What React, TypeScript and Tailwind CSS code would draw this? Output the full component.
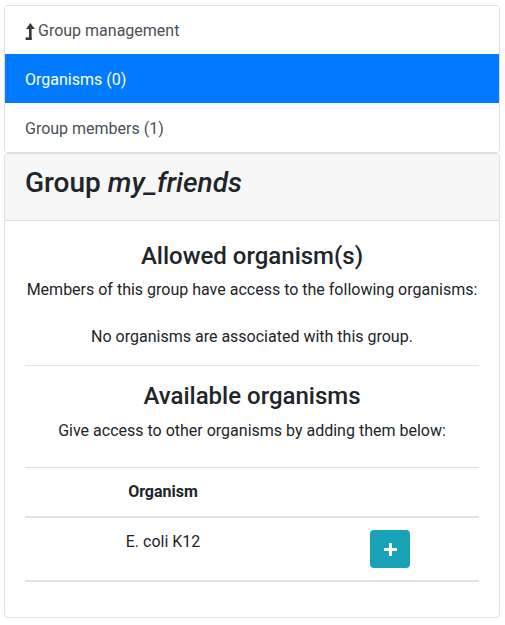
import React from "react";

function LevelUpIcon() {
  return (
    <svg width="10" height="17" viewBox="0 0 10 17" className="inline-block align-[-2px]" fill="#343a40">
      <polygon points="5.3,0 9.8,6 1,6" />
      <rect x="4" y="5" width="2.6" height="12" />
      <rect x="0.6" y="14.4" width="6" height="2.6" />
    </svg>
  );
}

function PlusIcon() {
  return (
    <svg width="13" height="13" viewBox="0 0 13 13" fill="white">
      <rect x="5" y="0" width="3" height="13" rx="0.5" />
      <rect x="0" y="5" width="13" height="3" rx="0.5" />
    </svg>
  );
}

export default function App() {
  return (
    <div className="font-['Roboto',sans-serif] text-[16px] leading-[24px] text-[#212529] bg-white w-[505px] min-h-[625px] pt-[5px] pl-[4px] pr-[5px]">
      <div className="border border-[#dfdfdf] rounded-[4px] overflow-hidden">
        <div className="h-[48px] px-[20px] pt-[2px] flex items-center text-[#495057] bg-white">
          <LevelUpIcon />
          <span className="ml-[3px]">Group management</span>
        </div>
        <div className="h-[49px] px-[20px] pt-[2px] flex items-center text-white bg-[#007bff]">
          Organisms (0)
        </div>
        <div className="h-[49px] px-[20px] pt-[2px] flex items-center text-[#495057] bg-white">
          Group members (1)
        </div>
      </div>
      <div className="border border-[#dfdfdf] rounded-[4px] overflow-hidden">
        <div className="bg-[#f7f7f7] border-b border-[#dfdfdf] px-[20px] pt-[12px] pb-[20px]">
          <h3 className="text-[28px] leading-[33.6px] font-medium">
            Group <em className="italic">my_friends</em>
          </h3>
        </div>
        <div className="px-[20px] pt-[21px] pb-[19px]">
          <h4 className="text-[24px] leading-[28.8px] font-medium text-center mb-[8px]">Allowed organism(s)</h4>
          <p className="text-center">Members of this group have access to the following organisms:</p>
          <p className="text-center mt-[23px]">No organisms are associated with this group.</p>
          <hr className="my-[16px] border-0 border-t border-[#e5e5e5]" />
          <h4 className="text-[24px] leading-[28.8px] font-medium text-center mb-[8px]">Available organisms</h4>
          <p className="text-center">Give access to other organisms by adding them below:</p>
          <table className="w-full mt-[24px] border-collapse">
            <thead>
              <tr>
                <th className="w-[276px] p-[12px] text-center font-bold border-t border-b-2 border-[#dee2e6]">Organism</th>
                <th className="p-[12px] border-t border-b-2 border-[#dee2e6]"></th>
              </tr>
            </thead>
            <tbody>
              <tr>
                <td className="p-[12px] text-center align-top border-b-2 border-[#dee2e6]">E. coli K12</td>
                <td className="p-[12px] text-center align-top border-b-2 border-[#dee2e6]">
                  <button className="inline-flex items-center justify-center w-[40px] h-[38px] rounded-[4px] bg-[#17a2b8]">
                    <PlusIcon />
                  </button>
                </td>
              </tr>
            </tbody>
          </table>
          <div className="h-[16px]" />
        </div>
      </div>
    </div>
  );
}
